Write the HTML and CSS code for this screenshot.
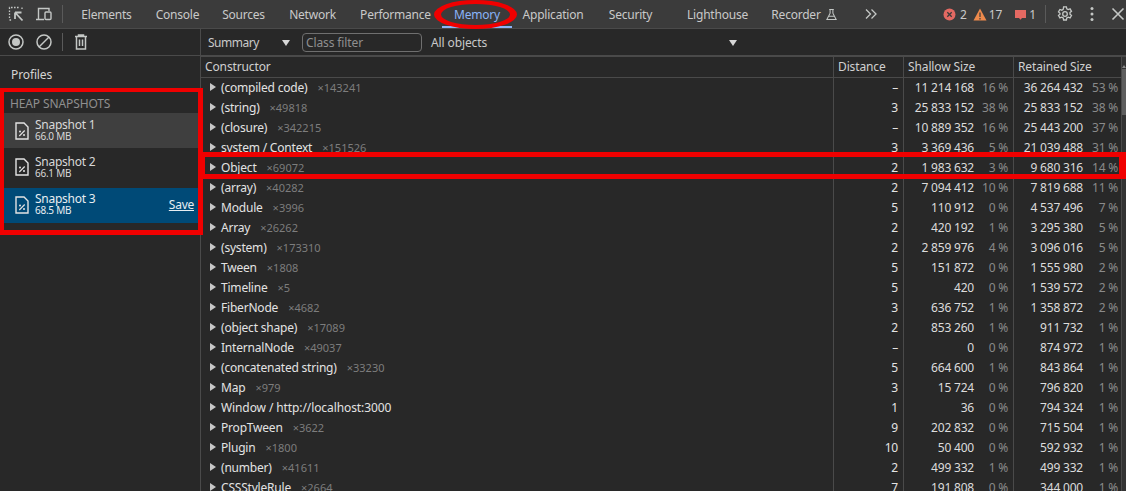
FILE: index.html
```html
<!DOCTYPE html>
<html lang="en">
<head>
<meta charset="utf-8">
<title>DevTools Memory</title>
<link rel="stylesheet" href="styles.css">
</head>
<body>
<div class="app">
  <header class="tabbar">
    <div class="tool-icons">
      <svg class="ico" viewBox="0 0 18 18"><path d="M2.500 13V2.500H13M15 2.500v3M2.500 15h3" fill="none" stroke="#c4c7c5" stroke-width="1.300" stroke-dasharray="1.600 1.400"/><path d="M8 7.500h6.500M8 7.500V14M8.500 8l7 7.500" fill="none" stroke="#c4c7c5" stroke-width="1.800"/></svg>
      <svg class="ico" viewBox="0 0 18 18"><path d="M1 14.500h8M3.500 14V3.500H14V6" fill="none" stroke="#c4c7c5" stroke-width="1.400"/><rect x="10" y="7" width="6" height="7.500" rx="1" fill="none" stroke="#c4c7c5" stroke-width="1.400"/></svg>
      <span class="vsep"></span>
    </div>
    <nav class="tabs">
      <span class="tab">Elements</span>
      <span class="tab">Console</span>
      <span class="tab">Sources</span>
      <span class="tab">Network</span>
      <span class="tab">Performance</span>
      <span class="tab tab-active">Memory</span>
      <span class="tab">Application</span>
      <span class="tab">Security</span>
      <span class="tab">Lighthouse</span>
      <span class="tab">Recorder
        <svg class="flask" viewBox="0 0 14 14"><path d="M4.500 1.500h5M5.500 1.500v4L2 12.500h10L8.500 5.500v-4M4 9h6" fill="none" stroke="#c4c7c5" stroke-width="1.100"/></svg>
      </span>
      <span class="tab more">
        <svg class="more-ico" viewBox="0 0 14 12"><path d="M2 1.500 6.500 6 2 10.500M7.500 1.500 12 6l-4.500 4.500" fill="none" stroke="#c4c7c5" stroke-width="1.300"/></svg>
      </span>
    </nav>
    <div class="status">
      <svg class="badge" viewBox="0 0 13 13"><circle cx="6.500" cy="6.500" r="6" fill="#e46962"/><path d="M4.300 4.300l4.400 4.400M8.700 4.300l-4.400 4.400" stroke="#3a3a3a" stroke-width="1.300"/></svg>
      <span class="count">2</span>
      <svg class="badge badge-warn" viewBox="0 0 14 13"><path d="M7 .5 13.500 12.500H.5z" fill="#ee8a4c"/><path d="M7 4.500v4.500M7 10v1.400" stroke="#3a3a3a" stroke-width="1.200"/></svg>
      <span class="count count-tight">17</span>
      <svg class="badge badge-msg" viewBox="0 0 13 13"><path d="M1 2h11v8H8l-1.500 1.800L5 10H1z" fill="#e46962"/></svg>
      <span class="count count-tight">1</span>
      <span class="vsep"></span>
      <svg class="ico gear" viewBox="0 0 18 18"><path d="M7.600 1.800h2.800l.4 2 1.400.8 1.900-.7 1.400 2.400-1.500 1.300v1.600l1.500 1.300-1.400 2.400-1.900-.7-1.400.8-.4 2H7.600l-.4-2-1.400-.8-1.900.7-1.400-2.400 1.500-1.300V8.200L2.500 6.900l1.400-2.400 1.900.7 1.400-.8z" fill="none" stroke="#c4c7c5" stroke-width="1.300"/><circle cx="9" cy="9" r="2.300" fill="none" stroke="#c4c7c5" stroke-width="1.300"/></svg>
      <svg class="ico kebab" viewBox="0 0 18 18"><circle cx="9" cy="3.500" r="1.500" fill="#c4c7c5"/><circle cx="9" cy="9" r="1.500" fill="#c4c7c5"/><circle cx="9" cy="14.500" r="1.500" fill="#c4c7c5"/></svg>
      <svg class="ico close" viewBox="0 0 18 18"><path d="M3.500 3.500l11 11M14.500 3.500l-11 11" stroke="#c4c7c5" stroke-width="1.600"/></svg>
    </div>
  </header>

  <div class="main">
    <aside class="side">
      <div class="side-tools">
        <svg class="ico" viewBox="0 0 18 18"><circle cx="9" cy="9" r="7" fill="none" stroke="#c4c7c5" stroke-width="1.500"/><circle cx="9" cy="9" r="4" fill="#c4c7c5"/></svg>
        <svg class="ico" viewBox="0 0 18 18"><circle cx="9" cy="9" r="7" fill="none" stroke="#c4c7c5" stroke-width="1.500"/><path d="M4 14 14 4" stroke="#c4c7c5" stroke-width="1.500"/></svg>
        <span class="vsep"></span>
        <svg class="ico" viewBox="0 0 18 18"><path d="M3 3.500h12M6.500 3.500V2h5v1.500M4.500 3.500V16h9V3.500M7.500 6.500v6.500M10.500 6.500v6.500" fill="none" stroke="#c4c7c5" stroke-width="1.500"/></svg>
      </div>
      <div class="profiles">Profiles</div>
      <div class="group-title">HEAP SNAPSHOTS</div>
      <div class="snap snap-hover">
        <svg class="file" viewBox="0 0 14 18"><path d="M1 1h8l4 4v12H1z" fill="none" stroke="#e3e3e3" stroke-width="1.400"/><path d="M4.300 14 9.700 8.500" stroke="#e3e3e3" stroke-width="1.100"/><circle cx="5" cy="9.500" r="1" fill="#e3e3e3"/><circle cx="9" cy="13" r="1" fill="#e3e3e3"/></svg>
        <div class="snap-text"><div class="snap-name">Snapshot 1</div><div class="snap-size">66.0 MB</div></div>
      </div>
      <div class="snap">
        <svg class="file" viewBox="0 0 14 18"><path d="M1 1h8l4 4v12H1z" fill="none" stroke="#e3e3e3" stroke-width="1.400"/><path d="M4.300 14 9.700 8.500" stroke="#e3e3e3" stroke-width="1.100"/><circle cx="5" cy="9.500" r="1" fill="#e3e3e3"/><circle cx="9" cy="13" r="1" fill="#e3e3e3"/></svg>
        <div class="snap-text"><div class="snap-name">Snapshot 2</div><div class="snap-size">66.1 MB</div></div>
      </div>
      <div class="snap snap-selected">
        <svg class="file" viewBox="0 0 14 18"><path d="M1 1h8l4 4v12H1z" fill="none" stroke="#e3e3e3" stroke-width="1.400"/><path d="M4.300 14 9.700 8.500" stroke="#e3e3e3" stroke-width="1.100"/><circle cx="5" cy="9.500" r="1" fill="#e3e3e3"/><circle cx="9" cy="13" r="1" fill="#e3e3e3"/></svg>
        <div class="snap-text"><div class="snap-name">Snapshot 3</div><div class="snap-size">68.5 MB</div></div>
        <span class="save">Save</span>
      </div>
    </aside>

    <section class="content">
      <div class="filters">
        <span class="select select-summary"><span class="summary-label">Summary</span><i class="caret"></i></span>
        <span class="class-filter">Class filter</span>
        <span class="select select-objects">All objects<i class="caret"></i></span>
      </div>
      <div class="grid">
        <div class="row head">
          <div class="c c-name">Constructor</div>
          <div class="c c-dist">Distance</div>
          <div class="c c-size">Shallow Size</div>
          <div class="c c-size c-last">Retained Size</div>
        </div>
        <div class="rows">
          <div class="row"><div class="c c-name"><i class="tri"></i>(compiled code)<span class="n">×143241</span></div><div class="c c-dist">–</div><div class="c c-size"><b>11 214 168</b><span class="p">16 %</span></div><div class="c c-size c-last"><b>36 264 432</b><span class="p">53 %</span></div></div>
          <div class="row"><div class="c c-name"><i class="tri"></i>(string)<span class="n">×49818</span></div><div class="c c-dist">3</div><div class="c c-size"><b>25 833 152</b><span class="p">38 %</span></div><div class="c c-size c-last"><b>25 833 152</b><span class="p">38 %</span></div></div>
          <div class="row"><div class="c c-name"><i class="tri"></i>(closure)<span class="n">×342215</span></div><div class="c c-dist">–</div><div class="c c-size"><b>10 889 352</b><span class="p">16 %</span></div><div class="c c-size c-last"><b>25 443 200</b><span class="p">37 %</span></div></div>
          <div class="row"><div class="c c-name"><i class="tri"></i>system / Context<span class="n">×151526</span></div><div class="c c-dist">3</div><div class="c c-size"><b>3 369 436</b><span class="p">5 %</span></div><div class="c c-size c-last"><b>21 039 488</b><span class="p">31 %</span></div></div>
          <div class="row"><div class="c c-name"><i class="tri"></i>Object<span class="n">×69072</span></div><div class="c c-dist">2</div><div class="c c-size"><b>1 983 632</b><span class="p">3 %</span></div><div class="c c-size c-last"><b>9 680 316</b><span class="p">14 %</span></div></div>
          <div class="row"><div class="c c-name"><i class="tri"></i>(array)<span class="n">×40282</span></div><div class="c c-dist">2</div><div class="c c-size"><b>7 094 412</b><span class="p">10 %</span></div><div class="c c-size c-last"><b>7 819 688</b><span class="p">11 %</span></div></div>
          <div class="row"><div class="c c-name"><i class="tri"></i>Module<span class="n">×3996</span></div><div class="c c-dist">5</div><div class="c c-size"><b>110 912</b><span class="p">0 %</span></div><div class="c c-size c-last"><b>4 537 496</b><span class="p">7 %</span></div></div>
          <div class="row"><div class="c c-name"><i class="tri"></i>Array<span class="n">×26262</span></div><div class="c c-dist">2</div><div class="c c-size"><b>420 192</b><span class="p">1 %</span></div><div class="c c-size c-last"><b>3 295 380</b><span class="p">5 %</span></div></div>
          <div class="row"><div class="c c-name"><i class="tri"></i>(system)<span class="n">×173310</span></div><div class="c c-dist">2</div><div class="c c-size"><b>2 859 976</b><span class="p">4 %</span></div><div class="c c-size c-last"><b>3 096 016</b><span class="p">5 %</span></div></div>
          <div class="row"><div class="c c-name"><i class="tri"></i>Tween<span class="n">×1808</span></div><div class="c c-dist">5</div><div class="c c-size"><b>151 872</b><span class="p">0 %</span></div><div class="c c-size c-last"><b>1 555 980</b><span class="p">2 %</span></div></div>
          <div class="row"><div class="c c-name"><i class="tri"></i>Timeline<span class="n">×5</span></div><div class="c c-dist">5</div><div class="c c-size"><b>420</b><span class="p">0 %</span></div><div class="c c-size c-last"><b>1 539 572</b><span class="p">2 %</span></div></div>
          <div class="row"><div class="c c-name"><i class="tri"></i>FiberNode<span class="n">×4682</span></div><div class="c c-dist">3</div><div class="c c-size"><b>636 752</b><span class="p">1 %</span></div><div class="c c-size c-last"><b>1 358 872</b><span class="p">2 %</span></div></div>
          <div class="row"><div class="c c-name"><i class="tri"></i>(object shape)<span class="n">×17089</span></div><div class="c c-dist">2</div><div class="c c-size"><b>853 260</b><span class="p">1 %</span></div><div class="c c-size c-last"><b>911 732</b><span class="p">1 %</span></div></div>
          <div class="row"><div class="c c-name"><i class="tri"></i>InternalNode<span class="n">×49037</span></div><div class="c c-dist">–</div><div class="c c-size"><b>0</b><span class="p">0 %</span></div><div class="c c-size c-last"><b>874 972</b><span class="p">1 %</span></div></div>
          <div class="row"><div class="c c-name"><i class="tri"></i>(concatenated string)<span class="n">×33230</span></div><div class="c c-dist">5</div><div class="c c-size"><b>664 600</b><span class="p">1 %</span></div><div class="c c-size c-last"><b>843 864</b><span class="p">1 %</span></div></div>
          <div class="row"><div class="c c-name"><i class="tri"></i>Map<span class="n">×979</span></div><div class="c c-dist">3</div><div class="c c-size"><b>15 724</b><span class="p">0 %</span></div><div class="c c-size c-last"><b>796 820</b><span class="p">1 %</span></div></div>
          <div class="row"><div class="c c-name"><i class="tri"></i><span class="url">Window / http://localhost:3000</span></div><div class="c c-dist">1</div><div class="c c-size"><b>36</b><span class="p">0 %</span></div><div class="c c-size c-last"><b>794 324</b><span class="p">1 %</span></div></div>
          <div class="row"><div class="c c-name"><i class="tri"></i>PropTween<span class="n">×3622</span></div><div class="c c-dist">9</div><div class="c c-size"><b>202 832</b><span class="p">0 %</span></div><div class="c c-size c-last"><b>715 504</b><span class="p">1 %</span></div></div>
          <div class="row"><div class="c c-name"><i class="tri"></i>Plugin<span class="n">×1800</span></div><div class="c c-dist">10</div><div class="c c-size"><b>50 400</b><span class="p">0 %</span></div><div class="c c-size c-last"><b>592 932</b><span class="p">1 %</span></div></div>
          <div class="row"><div class="c c-name"><i class="tri"></i>(number)<span class="n">×41611</span></div><div class="c c-dist">2</div><div class="c c-size"><b>499 332</b><span class="p">1 %</span></div><div class="c c-size c-last"><b>499 332</b><span class="p">1 %</span></div></div>
          <div class="row"><div class="c c-name"><i class="tri"></i>CSSStyleRule<span class="n">×2664</span></div><div class="c c-dist">7</div><div class="c c-size"><b>191 808</b><span class="p">0 %</span></div><div class="c c-size c-last"><b>344 000</b><span class="p">1 %</span></div></div>
        </div>
        <div class="scroll-track"></div>
        <div class="scrollbar"></div>
      </div>
    </section>
  </div>

  <div class="mark mark-side"></div>
  <div class="mark mark-row"></div>
  <div class="mark mark-tab"></div>
</div>
</body>
</html>
```
FILE: styles.css
```css
* { box-sizing: border-box; }
html, body { margin: 0; height: 100%; }
body {
  background: #282828;
  color: #e3e3e3;
  font-family: "Noto Sans", "Open Sans", sans-serif;
  font-size: 12px;
  letter-spacing: -0.12px;
  overflow: hidden;
}
.app { position: relative; width: 1126px; height: 491px; overflow: hidden; display: flex; flex-direction: column; }
.ico { width: 18px; height: 18px; flex: none; }
.vsep { width: 1px; height: 18px; background: #5a5a5a; flex: none; }

.tabbar {
  height: 29px;
  flex: none;
  background: #3b3b3b;
  border-bottom: 1px solid #4a4a4a;
  display: flex;
  align-items: center;
  color: #c9c9c9;
}
.tool-icons { width: 69px; flex: none; display: flex; align-items: center; padding-left: 7px; gap: 10px; }
.tool-icons .vsep { margin-left: -1px; }
.tabs {
  display: grid;
  grid-template-columns: 75px 67px 65px 73px 93px 70px 82px 73px 101px 73px 60px;
  height: 28px;
  flex: none;
  letter-spacing: -0.22px;
}
.tab { display: flex; align-items: center; justify-content: center; white-space: nowrap; height: 28px; position: relative; }
.tab-active { color: #8ab4f8; }
.tab-active::after { content: ""; position: absolute; left: 0; right: 0; bottom: 0; height: 2px; background: #8ab4f8; }
.flask { width: 13px; height: 13px; margin-left: 4px; }
.more-ico { width: 14px; height: 12px; }
.status { display: flex; align-items: center; margin-left: 42px; flex: none; }
.badge { width: 13px; height: 13px; flex: none; }
.badge-warn { width: 14px; margin-left: 6px; }
.badge-msg { margin-left: 12px; }
.count { margin-left: 4px; color: #c9c9c9; }
.count-tight { margin-left: 2px; }
.status .vsep { margin-left: 9px; }
.gear { margin-left: 10px; }
.kebab { margin-left: 9px; }
.close { margin-left: 8px; }

.main { flex: 1; display: flex; min-height: 0; }
.side { width: 201px; flex: none; border-right: 1px solid #4a4a4a; display: flex; flex-direction: column; }
.side-tools { height: 27px; flex: none; display: flex; align-items: center; gap: 10px; padding-left: 7px; border-bottom: 1px solid #4a4a4a; }
.side-tools .vsep { margin: 0 -1px; }
.profiles { height: 37px; flex: none; display: flex; align-items: center; padding-left: 11px; color: #d4d4d4; }
.group-title { height: 20px; flex: none; display: flex; align-items: center; padding-left: 10px; color: #8f8f8f; }
.snap { height: 35px; margin-bottom: 2.5px; flex: none; display: flex; align-items: center; padding: 0 6px 1px 15px; color: #d8d8d8; letter-spacing: -0.25px; }
.snap + .snap { padding-bottom: 3px; }
.snap-hover { background: #3f3f3f; }
.snap-selected { background: #004a77; color: #e8eef2; }
.file { width: 14px; height: 18px; flex: none; margin-top: 1px; }
.snap-text { margin-left: 6px; flex: 1; min-width: 0; }
.snap-name { line-height: 13px; }
.snap-size { font-size: 10px; line-height: 11px; }
.save { text-decoration: underline; }

.content { flex: 1; min-width: 0; display: flex; flex-direction: column; }
.filters { height: 28px; flex: none; display: flex; align-items: center; border-bottom: 2px solid #4a4a4a; padding: 1px 0 0 7px; color: #c9c9c9; }
.select { display: flex; align-items: center; justify-content: space-between; flex: none; }
.select-summary { width: 82px; }
.summary-label { letter-spacing: -0.5px; }
.select-objects { width: 306px; margin-left: 9px; }
.caret { width: 0; height: 0; border-left: 4px solid transparent; border-right: 4px solid transparent; border-top: 6px solid #d8d8d8; }
.class-filter { width: 120px; height: 19px; margin-left: 12px; border: 1px solid #6f6f6f; border-radius: 4px; padding-left: 3px; line-height: 17px; color: #8f8f8f; flex: none; }

.grid { flex: 1; min-height: 0; position: relative; overflow: hidden; }
.rows { overflow: hidden; letter-spacing: -0.2px; }
.row { display: flex; height: 20px; align-items: center; white-space: nowrap; }
.head { height: 21px; border-bottom: 1px solid #4a4a4a; color: #d0d0d0; letter-spacing: -0.12px; }
.head .c { padding-bottom: 1px; }
.rows .c { padding-bottom: 2px; }
.c { height: 100%; display: flex; align-items: center; flex: none; }
.c-name { width: 632px; padding-left: 4px; }
.rows .c-name { padding-left: 9px; }
.url { letter-spacing: -0.1px; }
.c-dist { width: 70px; border-left: 1px solid #4a4a4a; padding: 0 5px 0 4px; justify-content: flex-end; }
.head .c-dist, .head .c-size { justify-content: flex-start; }
.c-size { width: 110px; border-left: 1px solid #4a4a4a; padding: 0 5px 0 4px; justify-content: flex-end; }
.c-last { width: 108px; padding-right: 3px; }
.c b { font-weight: 400; color: #dcdcdc; }
.p { width: 34px; text-align: right; color: #8a8a8a; flex: none; }
.c-last .p { width: 35px; }
.n { margin-left: 10px; font-size: 11px; color: #7d7d7d; letter-spacing: 0; }
.tri { width: 0; height: 0; border-top: 4px solid transparent; border-bottom: 4px solid transparent; border-left: 6px solid #c8c8c8; margin-right: 5px; flex: none; }
.scroll-track { position: absolute; right: 0; top: 0; width: 5px; height: 100%; background: #333; border-left: 1px solid #4a4a4a; }
.scroll-track::before { content: ""; position: absolute; left: 0; top: 8px; border-left: 2px solid transparent; border-right: 2px solid transparent; border-bottom: 3px solid #8a8a8a; }
.scrollbar { position: absolute; right: 0; top: 12px; width: 4px; height: 46px; background: #5e5e5e; }

.mark { position: absolute; border: 4px solid #f00000; pointer-events: none; }
.mark-side { left: 0; top: 88px; width: 203px; height: 147px; border-right-width: 5px; border-bottom-width: 5px; }
.mark-row { left: 202px; top: 152px; width: 924px; height: 27px; border-width: 5px 7px 5px 3px; }
.mark-tab { left: 434px; top: 0; width: 83px; height: 29px; border-width: 4px 7px; border-radius: 50%; }
```
